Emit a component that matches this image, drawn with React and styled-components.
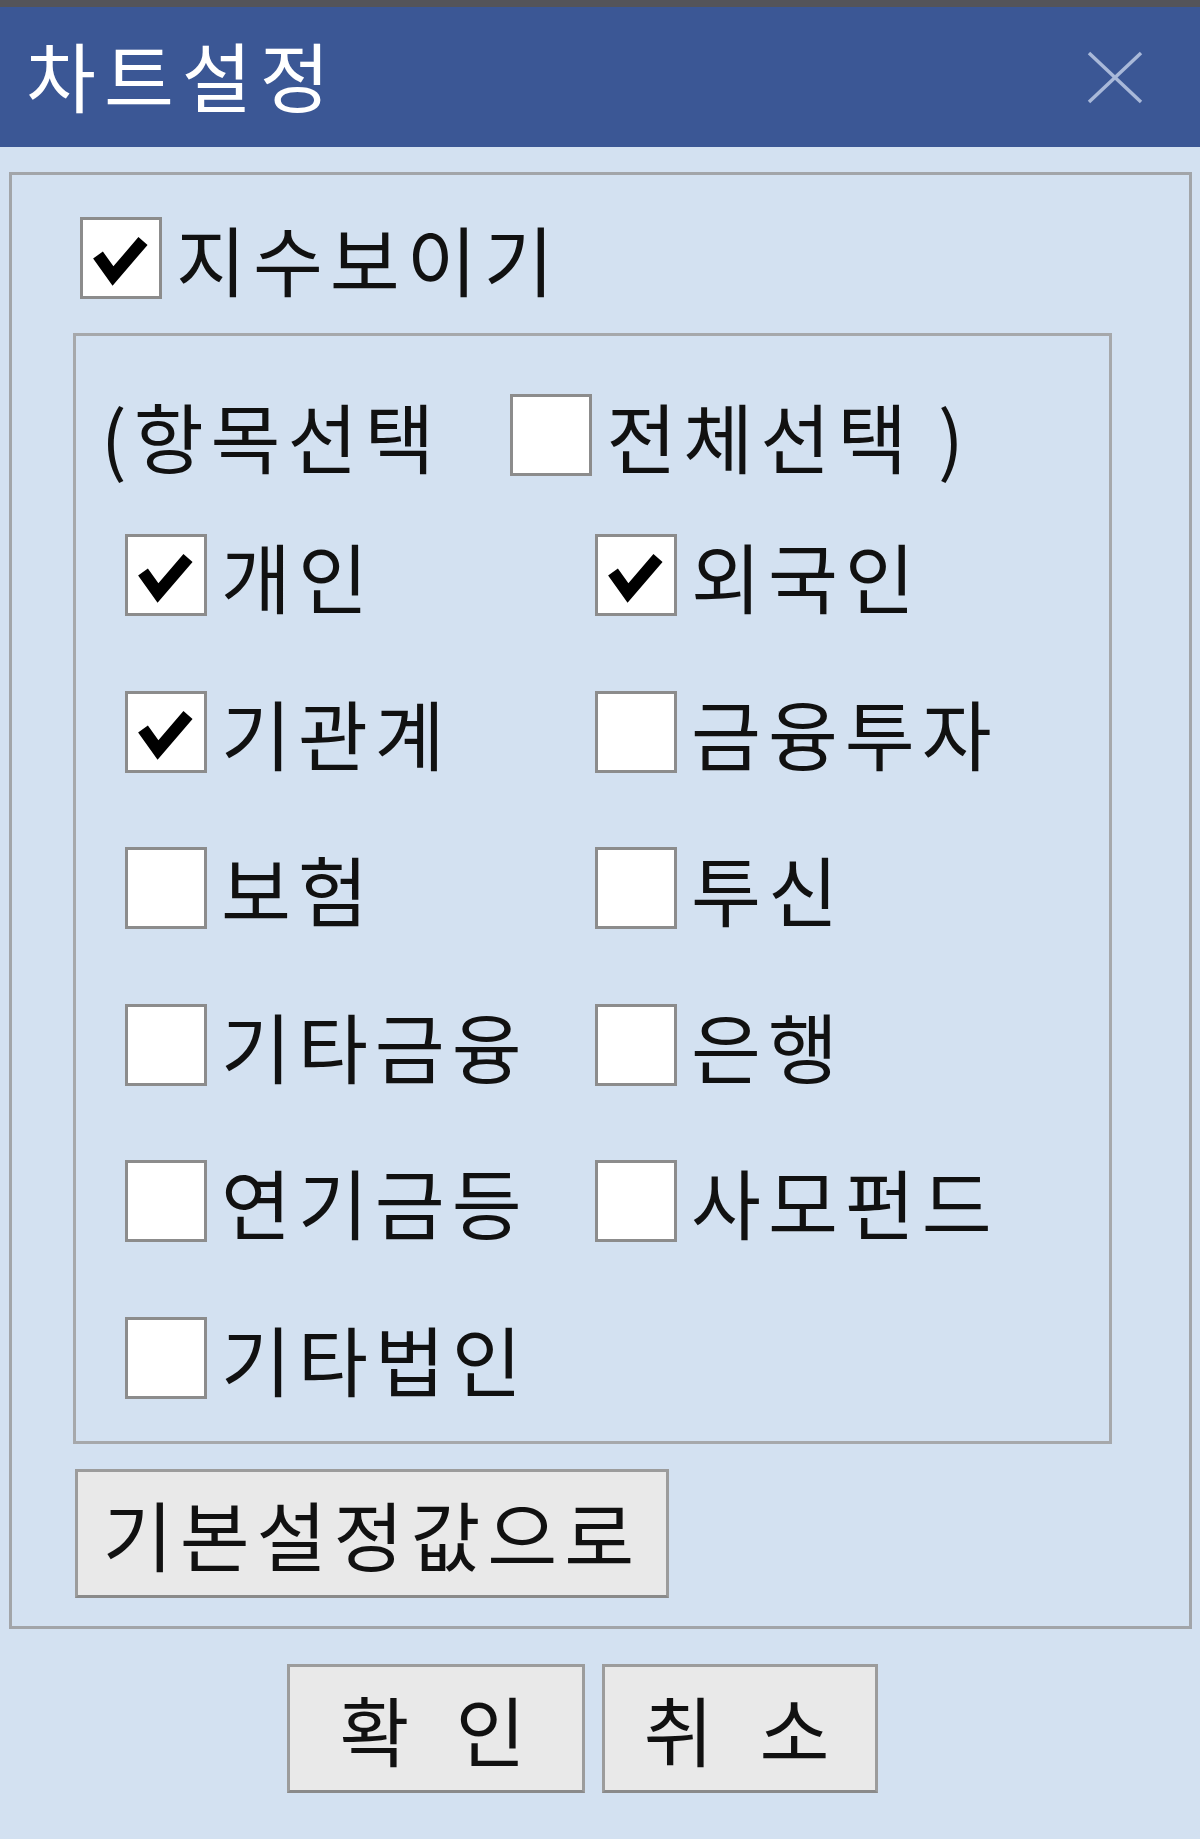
import React from 'react'
import styled, { createGlobalStyle } from 'styled-components'

const GlobalStyle = createGlobalStyle`
    html, body {
        margin: 0;
        padding: 0;
        background: #d3e1f1;
    }
    body {
        font-family: "Noto Sans CJK KR", "Noto Sans", sans-serif;
        color: #111;
    }
`

const items = [
    ['개인', true],
    ['외국인', true],
    ['기관계', true],
    ['금융투자', false],
    ['보험', false],
    ['투신', false],
    ['기타금융', false],
    ['은행', false],
    ['연기금등', false],
    ['사모펀드', false],
    ['기타법인', false],
]

const CheckBox = ({ checked }) => (
    <Box>
        {checked && (
            <svg width="76" height="76" viewBox="0 0 76 76">
                <polyline
                    points="15,35 30,56 60,21"
                    fill="none"
                    stroke="#000"
                    strokeWidth="12"
                    strokeLinejoin="miter"
                />
            </svg>
        )}
    </Box>
)

const App = () => {
    return (
        <Window>
            <GlobalStyle />
            <TopStrip />
            <TitleBar>
                <Title>차트설정</Title>
                <svg width="56" height="53" viewBox="0 0 56 53">
                    <line x1="2" y1="2" x2="54" y2="51" stroke="#a9b9d9" strokeWidth="3.5" />
                    <line x1="54" y1="2" x2="2" y2="51" stroke="#a9b9d9" strokeWidth="3.5" />
                </svg>
            </TitleBar>

            <Body>
                <OuterGroup>
                    <IndexRow>
                        <CheckBox checked />
                        <Label>지수보이기</Label>
                    </IndexRow>

                    <InnerGroup>
                        <HeaderRow>
                            <Label>(항목선택</Label>
                            <HeaderBox>
                                <CheckBox />
                            </HeaderBox>
                            <Label>전체선택 )</Label>
                        </HeaderRow>

                        <Grid>
                            {items.map(([name, checked]) => (
                                <Item key={name}>
                                    <CheckBox checked={checked} />
                                    <Label>{name}</Label>
                                </Item>
                            ))}
                        </Grid>
                    </InnerGroup>

                    <ResetButton>기본설정값으로</ResetButton>
                </OuterGroup>

                <Footer>
                    <Button $width={298}>확 인</Button>
                    <Button $width={276}>취 소</Button>
                </Footer>
            </Body>
        </Window>
    )
}

export default App

const Window = styled.div`
    width: 1200px;
    min-height: 1839px;
    background: #d3e1f1;
`

const TopStrip = styled.div`
    height: 7px;
    background: #545459;
`

const TitleBar = styled.div`
    height: 140px;
    background: #3b5795;
    padding: 0 57px 0 26px;
    box-sizing: border-box;

    display: flex;
    justify-content: space-between;
    align-items: center;
`

const Title = styled.div`
    color: #fff;
    font-size: 76px;
    line-height: 1;
    letter-spacing: 8px;
    margin-top: -6px;
`

const Body = styled.div`
    padding: 25px 8px 0 9px;
`

const OuterGroup = styled.div`
    border: 3px solid #a2a5a9;
    padding: 42px 77px 28px 61px;
`

const IndexRow = styled.div`
    display: flex;
    align-items: center;
    gap: 14px;
    height: 82px;
    margin-left: 7px;
`

const Box = styled.span`
    width: 76px;
    height: 76px;
    flex: none;
    background: #fff;
    border: 3px solid #8c8c8c;
    display: block;

    svg {
        display: block;
    }
`

const Label = styled.span`
    font-size: 76px;
    line-height: 1;
    letter-spacing: 7px;
    white-space: nowrap;
`

const InnerGroup = styled.div`
    margin-top: 34px;
    border: 3px solid #a6a8ab;
    padding: 57px 0 42px 25px;
`

const HeaderRow = styled.div`
    display: flex;
    align-items: center;
    height: 83px;
`

const HeaderBox = styled.span`
    margin: 0 14px 0 69px;
`

const Grid = styled.div`
    margin-top: 58px;
    margin-left: 24px;

    display: grid;
    grid-template-columns: 470px 470px;
    grid-auto-rows: 82px;
    row-gap: 74.5px;
`

const Item = styled.div`
    display: flex;
    align-items: center;
    gap: 14px;
`

const ButtonBase = styled.div`
    height: 129px;
    box-sizing: border-box;
    background: #e9e9e9;
    border: 3px solid #9c9c9c;
    border-bottom-color: #8a8a8a;
    font-size: 76px;
    line-height: 1;
    letter-spacing: 7px;
    white-space: nowrap;

    display: flex;
    justify-content: center;
    align-items: center;
`

const ResetButton = styled(ButtonBase)`
    width: 594px;
    margin: 25px 0 0 2px;
`

const Footer = styled.div`
    display: flex;
    gap: 17px;
    padding-left: 278px;
    margin-top: 35px;
`

const Button = styled(ButtonBase)`
    width: ${props => props.$width}px;
    word-spacing: 0.2em;
`
